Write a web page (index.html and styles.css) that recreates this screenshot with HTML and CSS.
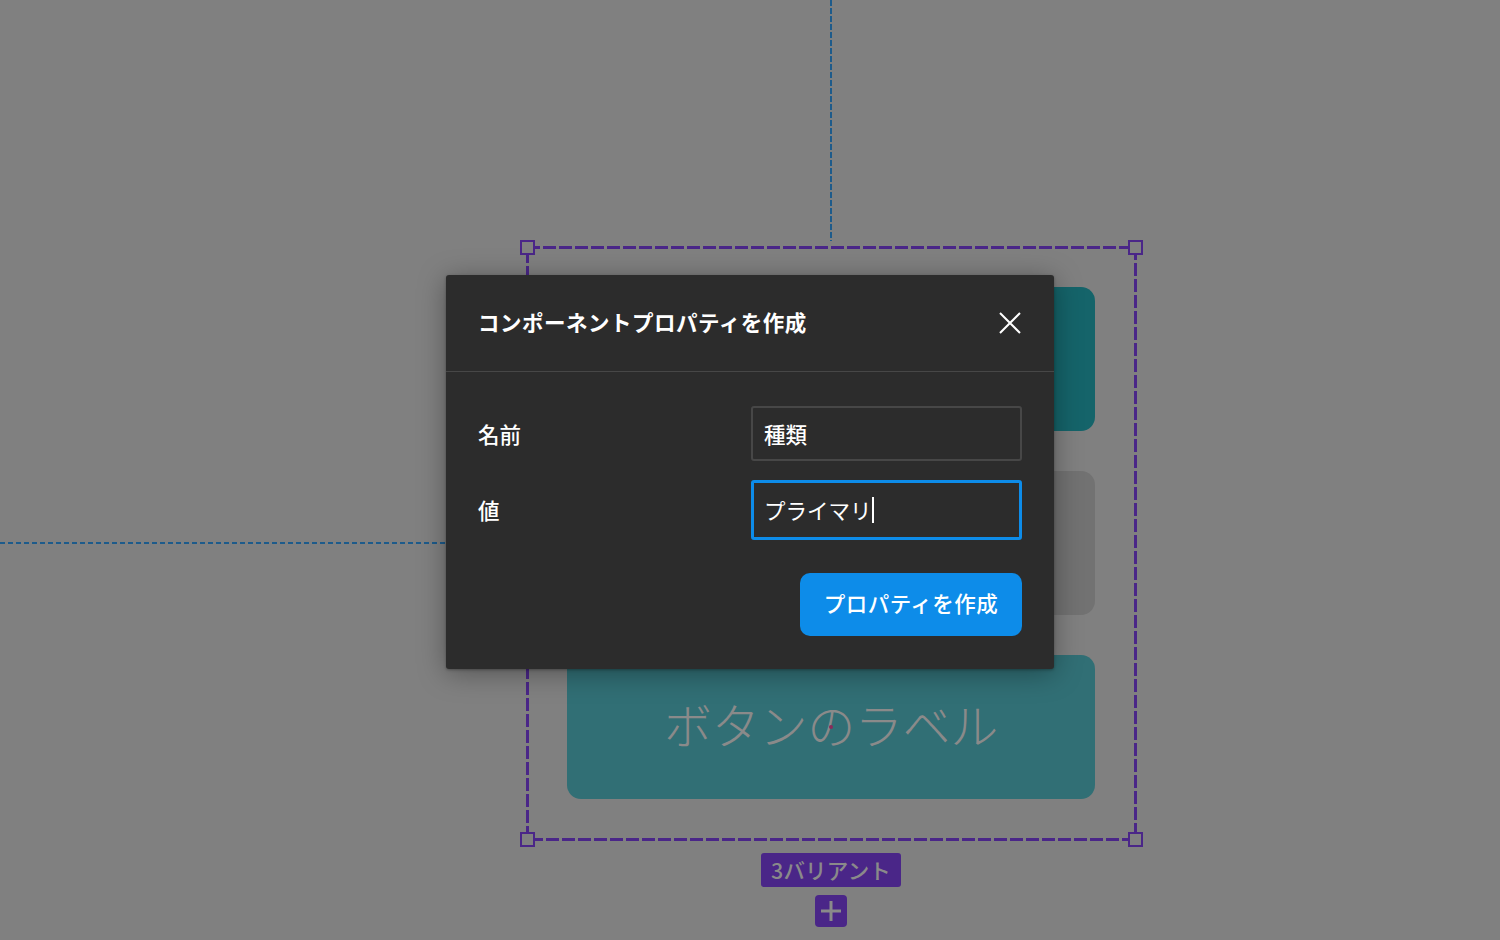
FILE: index.html
```html
<!DOCTYPE html>
<html lang="ja">
<head>
<meta charset="utf-8">
<title>コンポーネントプロパティを作成</title>
<link rel="stylesheet" href="styles.css">
</head>
<body>
<div class="canvas">
  <div class="guide guide-v"></div>
  <div class="guide guide-h"></div>

  <div class="frame">
    <svg class="frame-border" width="608" height="592" viewBox="0 0 608 592" shape-rendering="crispEdges">
      <rect x="0" y="0" width="608" height="592" fill="none" stroke="#4a2688" stroke-width="3" stroke-dasharray="13 3"/>
    </svg>
    <span class="handle h-tl"></span>
    <span class="handle h-tr"></span>
    <span class="handle h-bl"></span>
    <span class="handle h-br"></span>

    <div class="variants">
      <div class="variant variant-primary"></div>
      <div class="variant variant-secondary"></div>
      <div class="variant variant-tertiary">
        <span class="variant-label">ボタンのラベル</span>
        <span class="center-dot"></span>
      </div>
    </div>

    <div class="frame-meta">
      <div class="badge">3バリアント</div>
      <div class="add-btn">
        <svg width="22" height="22" viewBox="0 0 22 22"><path d="M11 1v20M1 11h20" stroke="#8a8a8a" stroke-width="3" fill="none"/></svg>
      </div>
    </div>
  </div>

  <div class="dialog">
    <div class="dialog-header">
      <h1 class="dialog-title">コンポーネントプロパティを作成</h1>
      <button class="close-btn" aria-label="閉じる">
        <svg width="22" height="22" viewBox="0 0 22 22"><path d="M1 1L21 21M21 1L1 21" stroke="#ffffff" stroke-width="2" fill="none"/></svg>
      </button>
    </div>
    <div class="dialog-body">
      <div class="field-row">
        <span class="field-label">名前</span>
        <div class="input">種類</div>
      </div>
      <div class="field-row field-row-focus">
        <span class="field-label">値</span>
        <div class="input input-focus">プライマリ<span class="caret"></span></div>
      </div>
      <div class="actions">
        <button class="primary-btn">プロパティを作成</button>
      </div>
    </div>
  </div>
</div>
</body>
</html>
```

FILE: styles.css
```css
* { box-sizing: border-box; }

html, body {
  margin: 0;
  padding: 0;
  width: 1500px;
  height: 940px;
  overflow: hidden;
  background: #808080;
  font-family: "Noto Sans CJK JP", "Noto Sans", sans-serif;
}

.canvas {
  position: relative;
  width: 1500px;
  height: 940px;
}

.guide { position: absolute; }
.guide-v {
  left: 830px;
  top: 0;
  width: 2px;
  height: 241px;
  background: repeating-linear-gradient(to bottom, #1d5b8b 0 6px, transparent 6px 8px);
}
.guide-h {
  left: 0;
  top: 542px;
  width: 446px;
  height: 2px;
  background: repeating-linear-gradient(to right, #1d5b8b 0 5px, transparent 5px 8px);
}

.frame {
  position: absolute;
  left: 527px;
  top: 247px;
  width: 608px;
  height: 592px;
}
.frame-border {
  position: absolute;
  left: 0;
  top: 0;
  overflow: visible;
}
.handle {
  position: absolute;
  width: 15px;
  height: 15px;
  border: 2px solid #4a2688;
  background: #808080;
  z-index: 2;
}
.h-tl { left: -7px; top: -7px; }
.h-tr { right: -8px; top: -7px; }
.h-bl { left: -7px; bottom: -8px; }
.h-br { right: -8px; bottom: -8px; }

.variants {
  display: flex;
  flex-direction: column;
  gap: 40px;
  padding: 40px;
  height: 100%;
}
.variant {
  height: 144px;
  border-radius: 14px;
  position: relative;
}
.variant-primary { background: #15646a; }
.variant-secondary { background: #727272; }
.variant-tertiary {
  background: #316f75;
  display: flex;
  align-items: center;
  justify-content: center;
  padding-bottom: 8px;
}
.variant-label {
  color: #8a8a8a;
  font-size: 48px;
  font-weight: 300;
  letter-spacing: -0.3px;
  line-height: 1;
}
.center-dot {
  position: absolute;
  left: 262px;
  top: 70px;
  width: 4px;
  height: 4px;
  border-radius: 50%;
  background: #8a2a5a;
}

.frame-meta {
  position: absolute;
  left: 0;
  right: 0;
  top: calc(100% + 14px);
  display: flex;
  flex-direction: column;
  align-items: center;
  gap: 8px;
}
.badge {
  height: 34px;
  padding: 0 10px;
  background: #4a2688;
  border-radius: 3px;
  color: #8a8a8a;
  font-size: 21.5px;
  font-weight: 500;
  line-height: 34px;
  letter-spacing: 0.2px;
}
.add-btn {
  width: 32px;
  height: 32px;
  background: #4a2688;
  border-radius: 4px;
  display: flex;
  align-items: center;
  justify-content: center;
}

.dialog {
  position: absolute;
  left: 446px;
  top: 275px;
  width: 608px;
  height: 394px;
  background: #2c2c2c;
  border-radius: 3px;
  box-shadow: 0 4px 28px rgba(0, 0, 0, 0.35), 0 1px 3px rgba(0, 0, 0, 0.3);
  color: #ffffff;
  z-index: 5;
}
.dialog-header {
  height: 97px;
  display: flex;
  align-items: center;
  justify-content: space-between;
  padding: 0 33px 3px 32px;
  border-bottom: 1px solid #474747;
}
.dialog-title {
  margin: 0;
  font-size: 21.5px;
  font-weight: 700;
  line-height: 1;
  letter-spacing: 0.5px;
}
.close-btn {
  width: 22px;
  height: 22px;
  padding: 0;
  border: 0;
  background: none;
  display: flex;
  margin-top: 3px;
}
.dialog-body {
  padding: 34px 32px 32px 32px;
  display: flex;
  flex-direction: column;
}
.field-row {
  display: flex;
  align-items: center;
  justify-content: space-between;
  height: 55px;
}
.field-row-focus {
  height: 60px;
  margin-top: 19px;
}
.field-label {
  font-size: 21.5px;
  font-weight: 500;
  line-height: 1;
}
.input {
  width: 271px;
  height: 55px;
  border: 2px solid #474747;
  border-radius: 3px;
  background: #2c2c2c;
  display: flex;
  align-items: center;
  padding-left: 11px;
  font-size: 21.5px;
  font-weight: 500;
  line-height: 1;
}
.input-focus {
  height: 60px;
  border: 3px solid #0d8ce9;
  padding-left: 10px;
  font-weight: 400;
}
.caret {
  display: inline-block;
  width: 2px;
  height: 26px;
  margin-left: 0;
  background: #ffffff;
}
.actions {
  display: flex;
  justify-content: flex-end;
  margin-top: 33px;
}
.primary-btn {
  width: 222px;
  height: 63px;
  border: 0;
  border-radius: 10px;
  background: #0d8ce9;
  color: #ffffff;
  font-family: inherit;
  font-size: 21.5px;
  font-weight: 500;
  letter-spacing: 0.5px;
  line-height: 1;
  padding: 0 0 3px 0;
}
```
